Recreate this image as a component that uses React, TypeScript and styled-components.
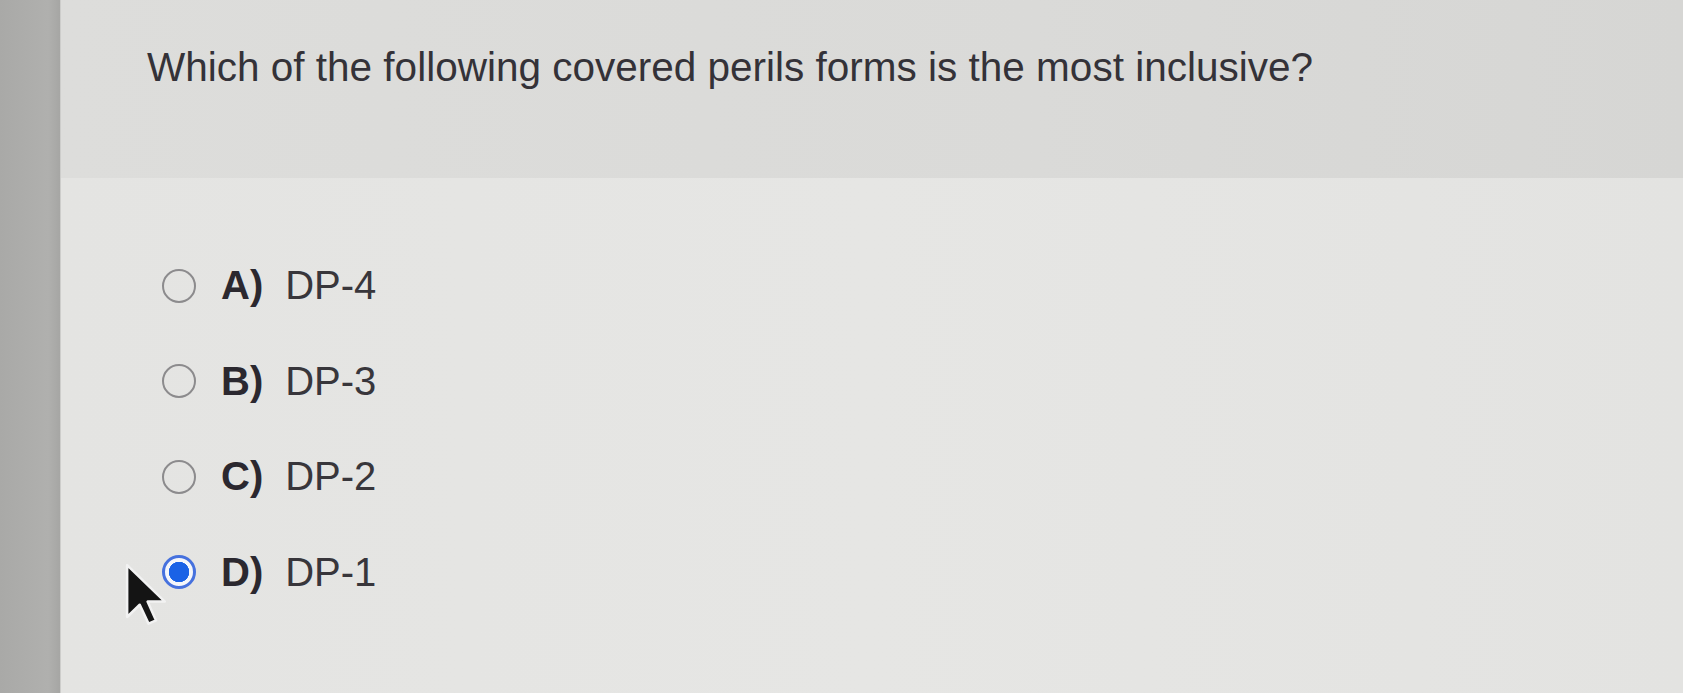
import React from "react";
import styled, { createGlobalStyle } from "styled-components";

const Global = createGlobalStyle`
  html, body { margin: 0; padding: 0; }
  body {
    width: 1683px;
    height: 693px;
    overflow: hidden;
    font-family: "Liberation Sans", Arial, sans-serif;
    background: #e3e3e1;
  }
`;

const Page = styled.div`
  display: flex;
  width: 1683px;
  height: 693px;
`;

const SideStrip = styled.div`
  width: 60px;
  flex: none;
  background: linear-gradient(90deg, #a9a9a7 0%, #b0b0ae 80%, #a6a6a4 100%);
  border-right: 1px solid #cdcdcb;
`;

const Main = styled.div`
  flex: 1;
  display: flex;
  flex-direction: column;
`;

const Header = styled.div`
  height: 178px;
  box-sizing: border-box;
  padding: 43px 0 0 86px;
  background: linear-gradient(90deg, #dddddb 0%, #dadad8 60%, #d6d6d4 100%);
`;

const Question = styled.div`
  font-size: 40.5px;
  color: #343238;
  line-height: 48px;
`;

const Body = styled.div`
  position: relative;
  flex: 1;
  padding: 60px 0 0 101px;
  background: linear-gradient(90deg, #e4e4e2 0%, #e6e6e4 50%, #e3e3e1 100%);
`;

const Options = styled.div`
  display: flex;
  flex-direction: column;
`;

const Row = styled.div`
  display: flex;
  align-items: center;
  height: 95.5px;
`;

const Radio = styled.span<{ $checked?: boolean }>`
  width: 34px;
  height: 34px;
  box-sizing: border-box;
  border-radius: 50%;
  flex: none;
  margin-right: 25px;
  border: ${(p) => (p.$checked ? "3px solid #4671de" : "2.5px solid #8c8b8d")};
  background: ${(p) =>
    p.$checked
      ? "radial-gradient(circle, #1a62e6 0 10px, #f4f6fb 10.5px 100%)"
      : "transparent"};
`;

const Letter = styled.span`
  font-size: 40px;
  font-weight: bold;
  color: #2b282f;
  margin-right: 22px;
`;

const Answer = styled.span`
  font-size: 40px;
  color: #38363b;
`;

const Cursor = styled.svg`
  position: absolute;
  left: 62px;
  top: 384px;
  width: 46px;
  height: 66px;
`;

const options = [
  { letter: "A)", text: "DP-4", checked: false },
  { letter: "B)", text: "DP-3", checked: false },
  { letter: "C)", text: "DP-2", checked: false },
  { letter: "D)", text: "DP-1", checked: true },
];

export default function App() {
  return (
    <>
      <Global />
      <Page>
        <SideStrip />
        <Main>
          <Header>
            <Question>Which of the following covered perils forms is the most inclusive?</Question>
          </Header>
          <Body>
            <Options>
              {options.map((o) => (
                <Row key={o.letter}>
                  <Radio $checked={o.checked} />
                  <Letter>{o.letter}</Letter>
                  <Answer>{o.text}</Answer>
                </Row>
              ))}
            </Options>
            <Cursor viewBox="-1 -1 14 21">
              <path
                d="M0 0 L0 16.5 L4 12.6 L6.8 18.6 L9.2 17.6 L6.5 11.6 L12 11.6 Z"
                fill="#141414"
                stroke="#f2f2f2"
                strokeWidth="0.8"
                strokeLinejoin="round"
              />
            </Cursor>
          </Body>
        </Main>
      </Page>
    </>
  );
}
